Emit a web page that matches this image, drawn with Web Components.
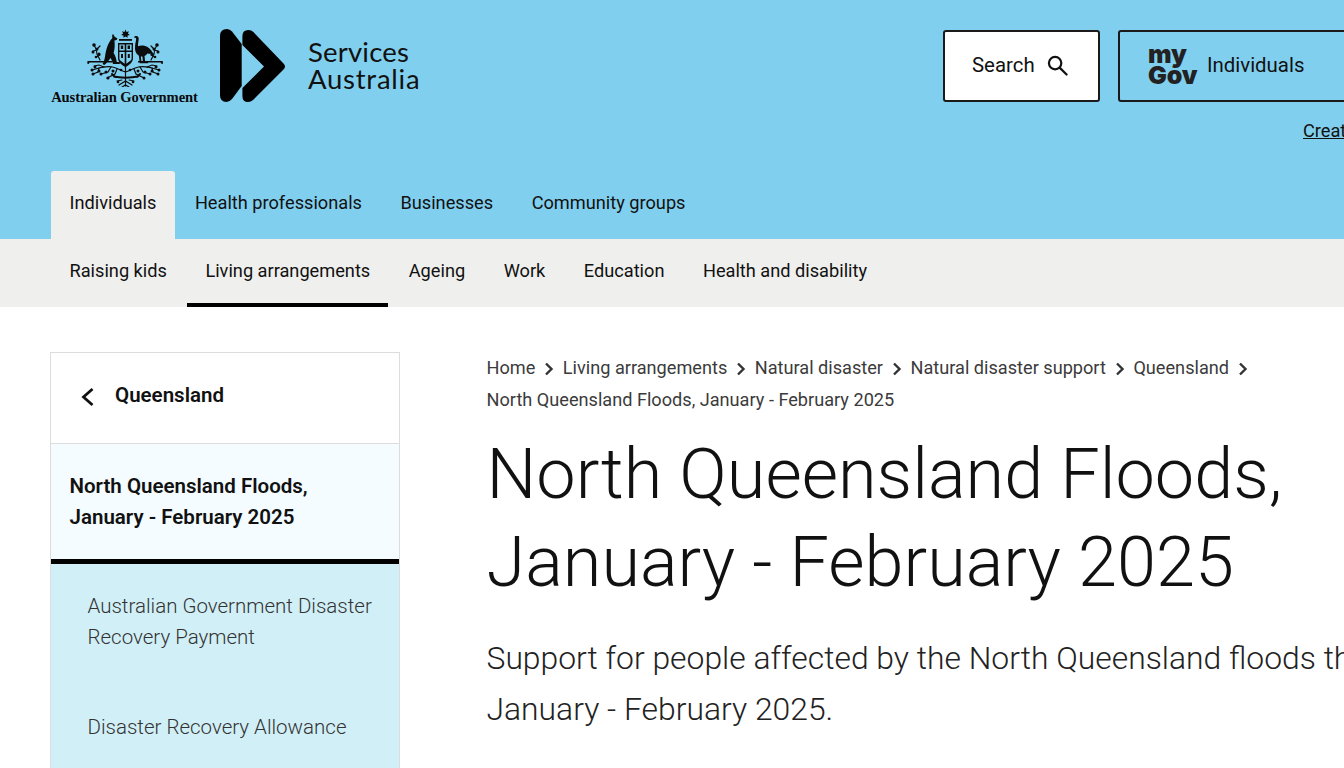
<!DOCTYPE html>
<html lang="en">
<head>
<meta charset="utf-8">
<title>North Queensland Floods, January - February 2025</title>
<style>
html, body { margin: 0; padding: 0; height: 100%; overflow: hidden; background: #fff; }
body { font-family: Roboto, "Liberation Sans", sans-serif; color: #000; width: 1344px; height: 768px; }
</style>
</head>
<body>
<site-header>
    <top-tabs></top-tabs>
</site-header>
<sub-nav></sub-nav>
<page-body>
    <side-nav slot="side" heading="Queensland" current="North Queensland Floods,|January - February 2025">
        <a href="#">Australian Government Disaster Recovery Payment</a>
        <a href="#">Disaster Recovery Allowance</a>
    </side-nav>
    <bread-crumbs slot="main" items="Home|Living arrangements|Natural disaster|Natural disaster support|Queensland" current="North Queensland Floods, January - February 2025"></bread-crumbs>
    <page-title slot="main" lead="Support for people affected by the North Queensland floods that started in January - February 2025.">North Queensland Floods,<br>January - February 2025</page-title>
</page-body>

<script>
class SiteHeader extends HTMLElement {
    constructor() {
        super();
        this.attachShadow({ mode: "open" });
        this.shadowRoot.innerHTML = `
        <style>
        :host { display: block; background: #81cfee; height: 239px; overflow: hidden; }
        .top { display: flex; align-items: flex-start; padding: 29px 0 0 51px; height: 171px; box-sizing: border-box; }
        .gov { width: 148px; flex: none; display: flex; flex-direction: column; align-items: center; margin-right: 21px; }
        .gov svg { display: block; filter: blur(.3px); }
        .gov span { font: bold 14.6px/14px "Liberation Serif", serif; white-space: nowrap; letter-spacing: -0.1px; margin-top: 3px; margin-left: -1px; color: #0a0a0a; }
        .sa { display: flex; align-items: center; flex: none; width: 200px; }
        .sa svg { display: block; flex: none; }
        .sa div { font: 400 27.5px/27px Lato, "Noto Sans", sans-serif; margin-left: 22px; color: #111; padding-bottom: 2px; }
        .sa div span { display: block; letter-spacing: .2px; }
        .sa div span + span { letter-spacing: .75px; }
        .actions { margin-left: 523px; flex: none; width: 420px; display: flex; flex-wrap: wrap; align-items: flex-start; margin-top: 1px; }
        .btn { box-sizing: border-box; height: 72px; border: 2px solid #1a1a1a; border-radius: 3px; display: flex; align-items: center; font-size: 20.4px; color: #111; padding-bottom: 3px; }
        .search { width: 157px; background: #fff; padding-left: 27px; margin-right: 18px; }
        .search svg { margin-left: 12px; margin-top: 2px; }
        .mygov { width: 245px; padding-left: 28px; }
        .mark { font: 900 25px/21px Inter, Roboto, sans-serif; color: #222; width: 59px; letter-spacing: -.1px; white-space: nowrap; }
        .create { box-sizing: border-box; width: 100%; margin-top: 18px; padding-left: 360px; font-size: 18.2px; line-height: 21px; white-space: nowrap; }
        .create a { color: #111; }
        </style>
        <div class="top">
            <div class="gov">
                <svg width="76" height="58" viewBox="86 29 76 58" fill="#0c0c0c">
                    <path d="M124.500 29.500l1 2.400 2.400-.7-1 2.300 2 1.400-2.400.6.100 2.300-2.100-1.400-2.100 1.400.100-2.300-2.400-.6 2-1.400-1-2.300 2.400.7z"/>
                    <path d="M118 39h13v1.800h-13z"/>
                    <path d="M112.500 34.500l1.300 2.500 2.600 1.200-.8 1.800-2.200.5c.6 4 .4 8.500-.8 12.500 1.800 2.500 2.600 5.500 3.200 9h3v2h-6.800c-.6-2.500-1.500-4.300-2.500-6-1.800 3-3.800 5.100-6.200 7l-1.800-1c1.800-2.700 2.200-5.600 2.800-9.300 1-6 2.800-12.500 7-16.500l-.1-3.700z"/>
                    <path d="M133.500 36.500c2.300-1.200 4.400.2 4.200 2.500-.2 2.600-1 5.500-.6 7.300 1.400-.8 3.800-1.100 6.300-.5 3.900.9 7 3.800 8.600 7.700-1.800.3-4.200.3-5.700 0-.6 1.200-1.600 2-2.800 2.500l.6 5.600h3v1.700h-5l-.7-6.800-1.600.1.600 5h2.400v1.700h-4l-.9-7.500c-3.200-2-4.400-5.500-3.800-10 .3-3 1.200-5.500 1-7.200-.3-.8-1.300-1-2.200-1z"/>
                    <path fill-rule="evenodd" d="M117 43h15v15c0 4-3.200 7-7.500 9-4.300-2-7.500-5-7.500-9zm1.400 1.400v6.100h5.300v-6.100zm6.900 0v6.100h5.300v-6.100zm-6.900 7.600v6c0 .8.200 1.500.6 2.200l4.700 3.600V52zm6.900 0v11.800l4.700-3.600c.4-.7.600-1.400.6-2.200v-6z"/>
                    <path d="M119.800 45.500h2.400v3.500h-2.400zM126.600 45.500h2.400v3.500h-2.400zM120 54h2v4h-2zM126.800 54h2v4h-2z"/>
                    <path d="M86.500 61h25v1.600H89.500c-.8 0-1.600.5-1.700 1.400h-1.300c-.1-1.200-.2-2.400 0-3zM137 61h24.700c.3.600.2 1.800.1 3h-1.300c-.1-.9-.9-1.400-1.700-1.400H137z"/>
                    <g fill="none" stroke="#0c0c0c" stroke-width="1.200" stroke-linecap="round">
                        <path d="M124.500 64v22M124.500 72c-4-1-8-4-13-5-5-1-11 0-20 3M124.500 72c4-1 8-4 13-5 5-1 11 0 20 3"/>
                        <path d="M110 67l-3 5-7 2M103 67l-5-2-5 1M98 68l-1 4-5 2M116 69l-2 5-8 4M139 67l3 5 7 2M146 67l5-2 5 1M151 68l1 4 5 2M133 69l2 5 8 4"/>
                        <path d="M93 45c2 3 3 6 3 9l3 6M156 45c-2 3-3 6-3 9l-3 6M92 51l4-1M157 51l-4-1M95 57l4-2M154 57l-4-2M97 48l2-2M152 48l-2-2"/>
                        <path d="M113 76.500c6 1.500 17 1.500 24 0M111 74l3 3M139 74l-3 3" stroke-width="2"/>
                        <path d="M118 85l6.500-4 6.500 4M121 87l3.500-2 3.500 2M116 81l5-1M133 81l-5-1"/>
                    </g>
                    <g>
                        <circle cx="93" cy="45" r="1.800"/><circle cx="96" cy="49" r="1.500"/><circle cx="92" cy="52" r="1.500"/><circle cx="98" cy="54" r="1.500"/><circle cx="95" cy="57" r="1.300"/><circle cx="156" cy="45" r="1.800"/><circle cx="153" cy="49" r="1.500"/><circle cx="157" cy="52" r="1.500"/><circle cx="151" cy="54" r="1.500"/><circle cx="154" cy="57" r="1.300"/>
                        <circle cx="91" cy="70" r="1.500"/><circle cx="94" cy="67" r="1.500"/><circle cx="92" cy="74" r="1.500"/><circle cx="98" cy="71" r="1.500"/><circle cx="100" cy="74" r="1.500"/><circle cx="105" cy="72" r="1.500"/><circle cx="107" cy="78" r="1.500"/><circle cx="112" cy="71" r="1.500"/>
                        <circle cx="158" cy="70" r="1.500"/><circle cx="155" cy="67" r="1.500"/><circle cx="157" cy="74" r="1.500"/><circle cx="151" cy="71" r="1.500"/><circle cx="149" cy="74" r="1.500"/><circle cx="144" cy="72" r="1.500"/><circle cx="143" cy="78" r="1.500"/><circle cx="137" cy="71" r="1.500"/>
                        <circle cx="120" cy="70" r="1.300"/><circle cx="129" cy="70" r="1.300"/><circle cx="117" cy="82" r="1.300"/><circle cx="132" cy="82" r="1.300"/>
                    </g>
                </svg>
                <span>Australian Government</span>
            </div>
            <div class="sa">
                <svg width="66" height="74" viewBox="220 29 66 74" fill="#000">
                    <path d="M220 36q0-7 7-7q3 0 5 2.500L241.700 44V86L232 99q-2.500 3-5.500 3q-6.500 0-6.500-7z"/>
                    <path d="M242.400 36q0-6 6-6q3 0 5 2L283.500 63.500q3 3 0 6L253 100q-2 2-5 2q-5.600 0-5.600-6V88L264 66.500 242.400 45z"/>
                </svg>
                <div><span>Services</span><span>Australia</span></div>
            </div>
            <div class="actions">
                <div class="btn search">Search
                    <svg width="21" height="21" viewBox="0 0 22 22" fill="none" stroke="#111" stroke-width="2.300"><circle cx="8.500" cy="8.500" r="6.500"/><path d="M13.500 13.500l7 7" stroke-linecap="round"/></svg>
                </div>
                <div class="btn mygov"><span class="mark">my<br>Gov</span>Individuals</div>
                <div class="create"><a href="#">Create a myGov account</a></div>
            </div>
        </div>
        <slot></slot>`;
    }
}

class TopTabs extends HTMLElement {
    constructor() {
        super();
        this.attachShadow({ mode: "open" });
        const tabs = ["Individuals", "Health professionals", "Businesses", "Community groups"];
        this.shadowRoot.innerHTML = `
        <style>
        :host { display: flex; gap: 1.5px; height: 68px; padding-left: 51px; font-size: 18.2px; }
        a { display: flex; align-items: center; padding: 0 18.5px 6px; color: #111; text-decoration: none; }
        a.on { background: #efefed; border-radius: 3px 3px 0 0; }
        </style>
        ${tabs.map((t, i) => `<a href="#" class="${i === 0 ? "on" : ""}">${t}</a>`).join("")}`;
    }
}

class SubNav extends HTMLElement {
    constructor() {
        super();
        this.attachShadow({ mode: "open" });
        const items = ["Raising kids", "Living arrangements", "Ageing", "Work", "Education", "Health and disability"];
        this.shadowRoot.innerHTML = `
        <style>
        :host { display: flex; gap: 1.5px; height: 68px; padding-left: 51px; background: #efefed; font-size: 18.2px; }
        a { display: flex; align-items: center; padding: 0 18.5px 2px; color: #111; text-decoration: none; box-sizing: border-box; border-bottom: 4px solid transparent; }
        a.on { border-bottom-color: #000; padding-right: 18px; margin-right: .5px; }
        </style>
        ${items.map((t, i) => `<a href="#" class="${i === 1 ? "on" : ""}">${t}</a>`).join("")}`;
    }
}

class PageBody extends HTMLElement {
    constructor() {
        super();
        this.attachShadow({ mode: "open" });
        this.shadowRoot.innerHTML = `
        <style>
        :host { display: grid; grid-template-columns: 350px 1fr; column-gap: 86.5px; padding: 45px 0 0 50px; height: 461px; box-sizing: border-box; overflow: hidden; }
        .main { min-width: 0; }
        </style>
        <div><slot name="side"></slot></div>
        <div class="main"><slot name="main"></slot></div>`;
    }
}

class SideNav extends HTMLElement {
    constructor() {
        super();
        this.attachShadow({ mode: "open" });
    }
    connectedCallback() {
        const lines = this.getAttribute("current").split("|");
        this.shadowRoot.innerHTML = `
        <style>
        :host { display: block; box-sizing: border-box; width: 350px; border: 1px solid #dcdcdc; border-bottom: 0; font-size: 20.5px; }
        .head { height: 83px; padding-bottom: 7px; display: flex; align-items: center; padding-left: 29px; font-weight: 600; color: #111; border-bottom: 1px solid #dcdcdc; }
        .head svg { margin: 5px 21px 0 0; flex: none; }
        .cur { background: #f4fcff; border-bottom: 5px solid #000; padding: 27px 18.5px 26px; font-weight: 600; line-height: 31px; color: #111; }
        .list { background: #d1eff7; padding: 27px 0 0 36.5px; min-height: 300px; }
        ::slotted(a) { display: block; color: #333; text-decoration: none; font-weight: 300; line-height: 31px; margin-bottom: 59px; padding-right: 20px; }
        </style>
        <div class="head">
            <svg width="14" height="20" viewBox="0 0 14 20" fill="none" stroke="#111" stroke-width="2.800"><path d="M12.500 2L3.500 10l9 8"/></svg>
            ${this.getAttribute("heading")}
        </div>
        <div class="cur">${lines.join("<br>")}</div>
        <div class="list"><slot></slot></div>`;
    }
}

class BreadCrumbs extends HTMLElement {
    constructor() {
        super();
        this.attachShadow({ mode: "open" });
    }
    connectedCallback() {
        const items = this.getAttribute("items").split("|");
        const chevron = `<svg width="10" height="14" viewBox="0 0 10 14" fill="none" stroke="#333" stroke-width="2.400"><path d="M2 1.500l5.500 5.500-5.500 5.500"/></svg>`;
        this.shadowRoot.innerHTML = `
        <style>
        :host { display: block; font-size: 18.15px; line-height: 31px; color: #3b3b3b; }
        .row { display: flex; flex-wrap: wrap; align-items: center; }
        a { color: inherit; text-decoration: none; white-space: nowrap; }
        svg { margin: 2px 8.75px 0 8.75px; flex: none; }
        .last { width: 100%; line-height: 32px; padding-top: 1px; }
        </style>
        <div class="row">
            ${items.map(t => `<a href="#">${t}</a>${chevron}`).join("")}
            <span class="last">${this.getAttribute("current")}</span>
        </div>`;
    }
}

class PageTitle extends HTMLElement {
    constructor() {
        super();
        this.attachShadow({ mode: "open" });
    }
    connectedCallback() {
        this.shadowRoot.innerHTML = `
        <style>
        :host { display: block; }
        h1 { margin: 14px 0 0; font-size: 70.2px; line-height: 88px; font-weight: 300; color: #111; white-space: nowrap; }
        p { margin: 27px 0 0; font-size: 31.85px; line-height: 51px; font-weight: 300; color: #222; width: 1040px; }
        </style>
        <h1><slot></slot></h1>
        <p>${this.getAttribute("lead")}</p>`;
    }
}

customElements.define("site-header", SiteHeader);
customElements.define("top-tabs", TopTabs);
customElements.define("sub-nav", SubNav);
customElements.define("page-body", PageBody);
customElements.define("side-nav", SideNav);
customElements.define("bread-crumbs", BreadCrumbs);
customElements.define("page-title", PageTitle);
</script>
</body>
</html>
